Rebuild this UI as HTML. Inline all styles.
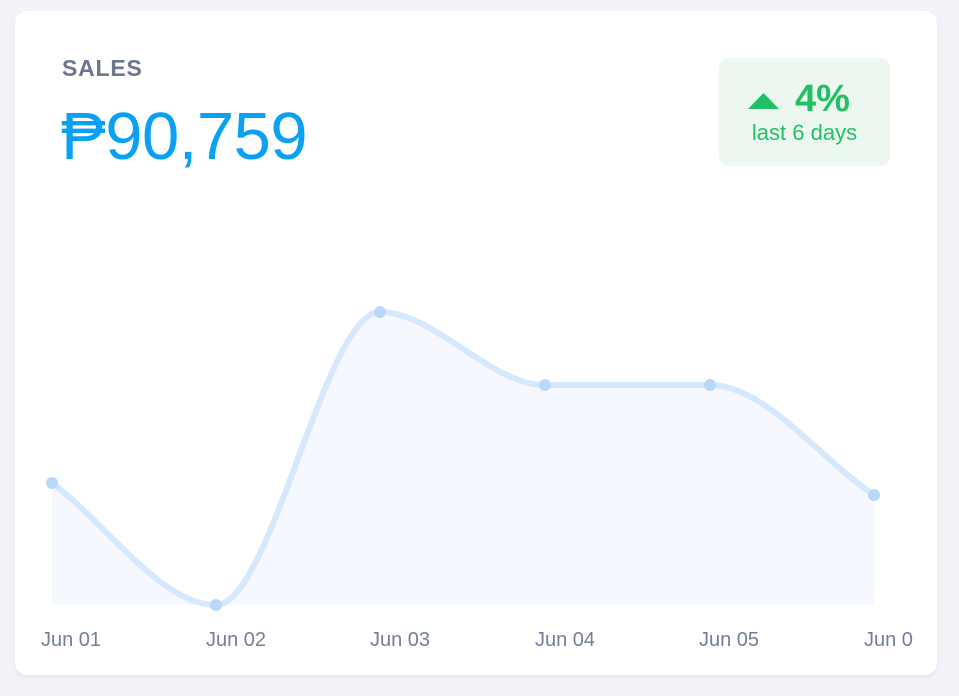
<!DOCTYPE html>
<html><head><meta charset="utf-8"><style>
html,body{margin:0;padding:0;width:959px;height:696px;background:#f1f3f8;overflow:hidden;font-family:"Liberation Sans",sans-serif}
.card{position:absolute;left:15px;top:11px;width:922px;height:664px;background:#fff;border-radius:12px;box-shadow:0 2px 4px rgba(0,0,0,0.06);overflow:hidden}
.t{position:absolute;white-space:nowrap}
</style></head><body>
<div class="card">
<div class="t" style="left:47px;top:44px;font-size:23px;font-weight:bold;color:#6b7791;letter-spacing:0.8px">SALES</div>
<div class="t" style="left:46px;top:88px;font-size:67px;color:#0aa0f6;line-height:76px;letter-spacing:-0.5px">₱90,759</div>
<div style="position:absolute;left:704px;top:47px;width:171px;height:108px;background:#ecf8ef;border-radius:10px"></div>
<svg style="position:absolute;left:733px;top:82px" width="31" height="16"><polygon points="15.5,0 31,16 0,16" fill="#22c065"/></svg>
<div class="t" style="left:780px;top:67px;font-size:38px;font-weight:bold;color:#22c065">4%</div>
<div class="t" style="left:704px;width:171px;text-align:center;top:109px;font-size:22px;color:#22c065">last 6 days</div>
<svg style="position:absolute;left:-15px;top:-11px" width="914" height="696">
<path d="M52,483 C107,524 161,605 216,605 C271,605 325,312 380,312 C435,312 490,385 545,385 C600,385 655,385 710,385 C765,385 819,458 874,495 L874,605 L52,605 Z" fill="#f5f8fe"/>
<path d="M52,483 C107,524 161,605 216,605 C271,605 325,312 380,312 C435,312 490,385 545,385 C600,385 655,385 710,385 C765,385 819,458 874,495" fill="none" stroke="#d6e8fd" stroke-width="6"/>
<g fill="#b9d9fa"><circle cx="52" cy="483" r="6"/><circle cx="216" cy="605" r="6"/><circle cx="380" cy="312" r="6"/><circle cx="545" cy="385" r="6"/><circle cx="710" cy="385" r="6"/><circle cx="874" cy="495" r="6"/></g>
<g font-size="20" fill="#737f96" font-family="Liberation Sans,sans-serif" text-anchor="middle">
<text x="71" y="646">Jun 01</text><text x="236" y="646">Jun 02</text><text x="400" y="646">Jun 03</text><text x="565" y="646">Jun 04</text><text x="729" y="646">Jun 05</text><text x="894" y="646">Jun 06</text>
</g>
</svg>
</div>
</body></html>
